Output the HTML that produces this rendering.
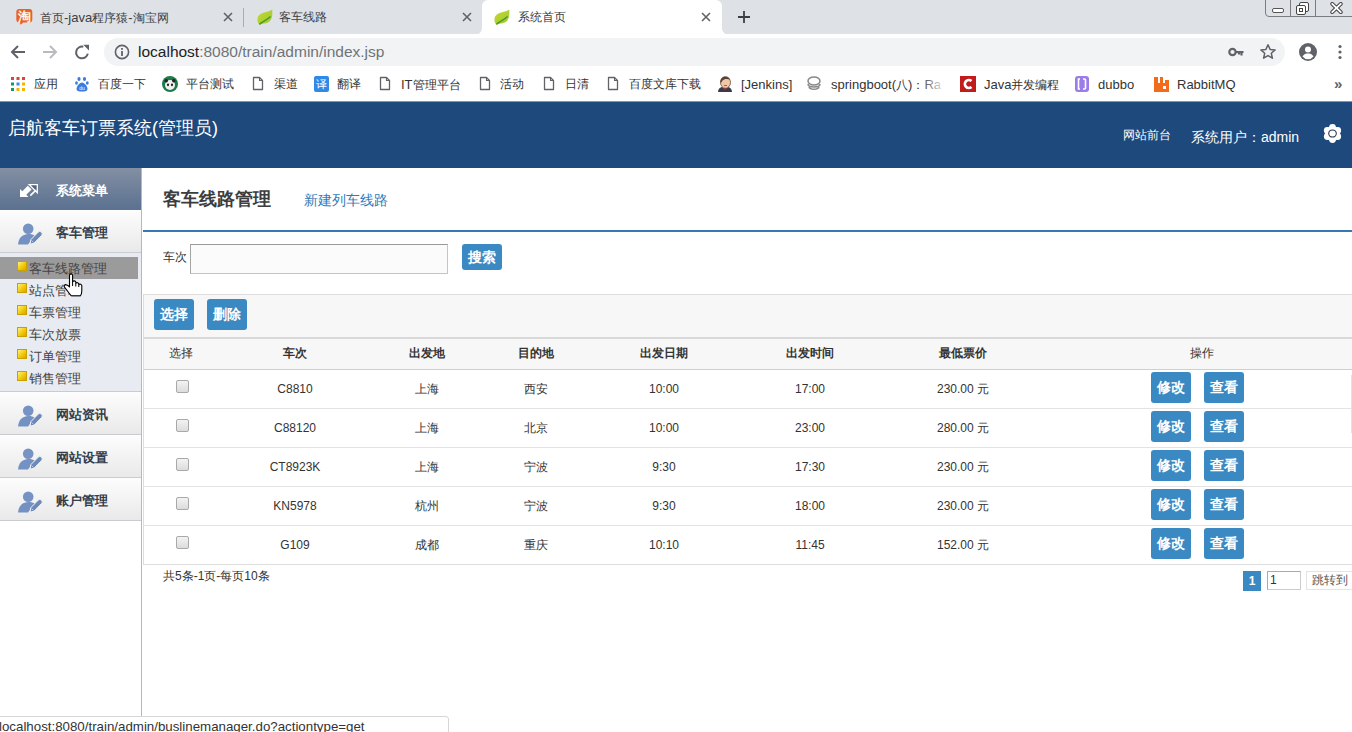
<!DOCTYPE html>
<html><head><meta charset="utf-8">
<style>
*{box-sizing:border-box}
html,body{margin:0;padding:0}
body{width:1352px;height:732px;overflow:hidden;position:relative;font-family:"Liberation Sans",sans-serif;background:#fff;color:#333}
.a{position:absolute}
.nw{white-space:nowrap}
/* chrome */
#tabbar{left:0;top:0;width:1352px;height:34px;background:#dee1e6}
.tabtxt{font-size:12px;color:#3c4043;top:10px;line-height:15px}
.tabx{width:10px;height:10px}
#toolbar{left:0;top:34px;width:1352px;height:34px;background:#fff}
#omni{left:104px;top:38px;width:1181px;height:28px;background:#f1f3f4;border-radius:14px}
#bm{left:0;top:68px;width:1352px;height:34px;background:#fff}
.l{font-size:13px}
.bmt{font-size:12px;color:#333;top:77px;line-height:15px}
/* page */
#hdr{left:0;top:101px;width:1352px;height:67px;background:#1e497d;border-top:1px solid #8696ad}
#side{left:0;top:168px;width:142px;height:564px;background:#fff;border-right:1px solid #b8b8b8}
.sec{left:0;width:141px;height:43px;background:linear-gradient(#fdfdfd,#e9e9ea);border-bottom:1px solid #c9cbd0}
.sect{left:56px;font-size:13px;font-weight:bold;color:#343d4b;line-height:16px}
.sub{font-size:13px;color:#444;line-height:15px;left:29px}
.sq{left:17px;width:10px;height:10px;background:linear-gradient(135deg,#fff27a,#f1c400 60%,#d9a400);border:1px solid #c7a100}
.btn{background:#3a89c2;color:#fff;font-weight:bold;font-size:14px;border-radius:3px;text-align:center}
.th{font-size:12px;color:#333;font-weight:bold;top:346px;line-height:15px}
.td{font-size:12px;color:#333;line-height:15px}
.rowb{left:143px;width:1209px;height:1px;background:#e3e3e3}
.cb{width:13px;height:13px;border:1px solid #a9a9a9;border-radius:2px;background:linear-gradient(#f3f3f3,#dcdcdc)}
</style></head><body>

<!-- TAB BAR -->
<div id="tabbar" class="a"></div>
<svg class="a" style="left:474px;top:0" width="256" height="34" viewBox="0 0 256 34"><path d="M0 34A6 6 0 0 0 8 28V6A6 6 0 0 1 14 0H242A6 6 0 0 1 248 6V28A6 6 0 0 0 256 34Z" fill="#fff"/></svg>
<div class="a" style="left:243px;top:8px;width:1px;height:19px;background:#a9acb1"></div>


<!-- tab contents -->
<svg class="a" style="left:16px;top:8px" width="17" height="18" viewBox="0 0 17 18"><path d="M3.3 0.9h10a3 3 0 0 1 3 3v7.5a3 3 0 0 1-3 3H7.2L4.6 16.8L3.8 14.4h-.5a3 3 0 0 1-3-3V3.9a3 3 0 0 1 3-3z" fill="#e8622b"/><text x="8.3" y="12.6" font-size="12.5" font-weight="bold" fill="#fff6e8" text-anchor="middle" font-family="Liberation Sans">淘</text></svg>
<div class="a tabtxt nw" style="left:40px">首页<span class="l">-java</span>程序猿<span class="l">-</span>淘宝网</div>
<svg class="a" style="left:223px;top:12px" width="10" height="10" viewBox="0 0 10 10"><path d="M1 1L9 9M9 1L1 9" stroke="#5f6368" stroke-width="1.6"/></svg>
<svg class="a" style="left:257px;top:9px" width="16" height="17" viewBox="0 0 16 17"><defs><linearGradient id="lg257" x1="0" y1="0" x2="1" y2="1"><stop offset="0" stop-color="#c6da2c"/><stop offset="1" stop-color="#9cc836"/></linearGradient></defs><path d="M15.2 0.6C11 4 5 2.5 1.5 7C0 9 0 13 2.3 15.6C5 14.5 9 15 12.5 12.5C15.5 10 15.5 5 15.2 0.6Z" fill="url(#lg257)"/><path d="M2.4 15.4C5.5 12.5 9.5 11.5 13.5 7.5" stroke="#4a9a2a" stroke-width="1.5" fill="none"/></svg>
<div class="a tabtxt nw" style="left:279px">客车线路</div>
<svg class="a" style="left:462px;top:12px" width="10" height="10" viewBox="0 0 10 10"><path d="M1 1L9 9M9 1L1 9" stroke="#5f6368" stroke-width="1.6"/></svg>
<svg class="a" style="left:494px;top:9px" width="16" height="17" viewBox="0 0 16 17"><defs><linearGradient id="lg494" x1="0" y1="0" x2="1" y2="1"><stop offset="0" stop-color="#c6da2c"/><stop offset="1" stop-color="#9cc836"/></linearGradient></defs><path d="M15.2 0.6C11 4 5 2.5 1.5 7C0 9 0 13 2.3 15.6C5 14.5 9 15 12.5 12.5C15.5 10 15.5 5 15.2 0.6Z" fill="url(#lg494)"/><path d="M2.4 15.4C5.5 12.5 9.5 11.5 13.5 7.5" stroke="#4a9a2a" stroke-width="1.5" fill="none"/></svg>
<div class="a tabtxt nw" style="left:518px">系统首页</div>
<svg class="a" style="left:701px;top:12px" width="10" height="10" viewBox="0 0 10 10"><path d="M1 1L9 9M9 1L1 9" stroke="#5f6368" stroke-width="1.6"/></svg>
<svg class="a" style="left:737px;top:10px" width="14" height="14" viewBox="0 0 14 14"><path d="M7 1V13M1 7H13" stroke="#3c4043" stroke-width="1.8"/></svg>
<!-- window controls -->
<div class="a" style="left:1265px;top:-2px;width:90px;height:19px;border:1px solid #7a7c80;border-radius:0 0 0 4px"></div>
<div class="a" style="left:1290px;top:0;width:1px;height:16px;background:#7a7c80"></div>
<div class="a" style="left:1315px;top:0;width:1px;height:16px;background:#7a7c80"></div>
<div class="a" style="left:1272px;top:8px;width:12px;height:5px;border:1px solid #555;border-radius:2px;background:#fff"></div>
<svg class="a" style="left:1295px;top:1px" width="15" height="15" viewBox="0 0 15 15"><rect x="4.5" y="1.5" width="9" height="9" rx="1.5" fill="#fff" stroke="#444"/><rect x="1.5" y="4.5" width="9" height="9" rx="1.5" fill="#fff" stroke="#444"/><rect x="4.5" y="7.5" width="3" height="3" fill="none" stroke="#444"/></svg>
<svg class="a" style="left:1330px;top:2px" width="13" height="12" viewBox="0 0 13 12"><path d="M2.2 1.8L10.8 10.2M10.8 1.8L2.2 10.2" stroke="#444" stroke-width="3.8" stroke-linecap="round"/><path d="M2.2 1.8L10.8 10.2M10.8 1.8L2.2 10.2" stroke="#fff" stroke-width="1.8" stroke-linecap="round"/></svg>

<!-- TOOLBAR -->
<div id="toolbar" class="a"></div>
<div id="omni" class="a"></div>
<div class="a nw" style="left:138px;top:43px;font-size:15.5px;line-height:18px;color:#202124">localhost<span style="color:#6f7378">:8080/train/admin/index.jsp</span></div>


<svg class="a" style="left:10px;top:44px" width="16" height="16" viewBox="0 0 16 16"><path d="M15 8H2.5M8 2L2 8l6 6" stroke="#5f6368" stroke-width="2" fill="none"/></svg>
<svg class="a" style="left:42px;top:44px" width="16" height="16" viewBox="0 0 16 16"><path d="M1 8h12.5M8 2l6 6-6 6" stroke="#b9bbbe" stroke-width="2" fill="none"/></svg>
<svg class="a" style="left:74px;top:44px" width="16" height="16" viewBox="0 0 16 16"><path d="M9.3 2.7A5.9 5.9 0 1 0 13.8 9.6" stroke="#5f6368" stroke-width="2" fill="none"/><path d="M9.3 0.8H15V6.5z" fill="#5f6368"/></svg>
<svg class="a" style="left:114px;top:44px" width="16" height="16" viewBox="0 0 16 16"><circle cx="8" cy="8" r="6.6" stroke="#5f6368" stroke-width="1.6" fill="none"/><rect x="7.1" y="7" width="1.8" height="5" fill="#5f6368"/><rect x="7.1" y="4" width="1.8" height="1.8" fill="#5f6368"/></svg>
<svg class="a" style="left:1228px;top:45px" width="17" height="14" viewBox="0 0 17 14"><circle cx="4.5" cy="7" r="3.2" stroke="#5f6368" stroke-width="2.2" fill="none"/><path d="M7.5 7H15.5M13.5 7V10.5M11 7V9.5" stroke="#5f6368" stroke-width="2.2" fill="none"/></svg>
<svg class="a" style="left:1259px;top:43px" width="18" height="18" viewBox="0 0 18 18"><path d="M9 1.8l2.1 4.6 5 .5-3.8 3.4 1.1 4.9L9 12.6l-4.4 2.6 1.1-4.9L1.9 6.9l5-.5z" stroke="#5f6368" stroke-width="1.5" fill="none" stroke-linejoin="round"/></svg>
<svg class="a" style="left:1298px;top:42px" width="20" height="20" viewBox="0 0 20 20"><circle cx="10" cy="10" r="9" fill="#5f6368"/><circle cx="10" cy="7.5" r="3" fill="#fff"/><path d="M4.5 14.5c1.5-2.5 3.3-3 5.5-3s4 .5 5.5 3a7 7 0 0 1-11 0z" fill="#fff"/></svg>
<svg class="a" style="left:1337px;top:44px" width="6" height="16" viewBox="0 0 6 16"><circle cx="3" cy="2.5" r="1.6" fill="#5f6368"/><circle cx="3" cy="8" r="1.6" fill="#5f6368"/><circle cx="3" cy="13.5" r="1.6" fill="#5f6368"/></svg>

<!-- BOOKMARKS -->
<div id="bm" class="a"></div>


<svg class="a" style="left:11px;top:77px" width="14" height="14" viewBox="0 0 14 14">
<rect x="0" y="0" width="3" height="3" fill="#db4437"/><rect x="5.5" y="0" width="3" height="3" fill="#db4437"/><rect x="11" y="0" width="3" height="3" fill="#db4437"/>
<rect x="0" y="5.5" width="3" height="3" fill="#0f9d58"/><rect x="5.5" y="5.5" width="3" height="3" fill="#4285f4"/><rect x="11" y="5.5" width="3" height="3" fill="#f4b400"/>
<rect x="0" y="11" width="3" height="3" fill="#0f9d58"/><rect x="5.5" y="11" width="3" height="3" fill="#f4b400"/><rect x="11" y="11" width="3" height="3" fill="#f4b400"/></svg>
<div class="a bmt nw" style="left:34px">应用</div>
<svg class="a" style="left:75px;top:76px" width="14" height="16" viewBox="0 0 14 16"><ellipse cx="4" cy="3" rx="1.6" ry="2" fill="#3a7be0"/><ellipse cx="9.5" cy="3" rx="1.6" ry="2" fill="#3a7be0"/><ellipse cx="1.5" cy="7" rx="1.4" ry="1.8" fill="#3a7be0"/><ellipse cx="12.3" cy="7" rx="1.4" ry="1.8" fill="#3a7be0"/><path d="M7 6.5c2.5 0 5.5 4 5.5 6.5 0 2-2 2.5-5.5 2.5S1.5 15 1.5 13c0-2.5 3-6.5 5.5-6.5z" fill="#3a7be0"/><text x="7" y="13.6" font-size="5" fill="#fff" text-anchor="middle" font-family="Liberation Sans">du</text></svg>
<div class="a bmt nw" style="left:98px">百度一下</div>
<svg class="a" style="left:162px;top:76px" width="16" height="16" viewBox="0 0 16 16"><circle cx="8" cy="8" r="8" fill="#1e7a4a"/><circle cx="8" cy="9" r="5" fill="#f2f2f2"/><circle cx="4.2" cy="4.8" r="1.8" fill="#222"/><circle cx="11.8" cy="4.8" r="1.8" fill="#222"/><ellipse cx="6" cy="8.8" rx="1.1" ry="1.4" fill="#222"/><ellipse cx="10" cy="8.8" rx="1.1" ry="1.4" fill="#222"/></svg>
<div class="a bmt nw" style="left:186px">平台测试</div>
<svg class="a" style="left:252px;top:76px" width="12" height="15" viewBox="0 0 12 15"><path d="M1.5 1.5h6l3 3v9h-9z" stroke="#5f6368" stroke-width="1.3" fill="#fff" stroke-linejoin="round"/><path d="M7.5 1.5v3h3" stroke="#5f6368" stroke-width="1.1" fill="none"/></svg>
<div class="a bmt nw" style="left:274px">渠道</div>
<div class="a" style="left:314px;top:76px;width:15px;height:16px;background:#2e8ae6;border-radius:2px;color:#fff;font-size:11px;line-height:16px;text-align:center">译</div>
<div class="a bmt nw" style="left:337px">翻译</div>
<svg class="a" style="left:379px;top:76px" width="12" height="15" viewBox="0 0 12 15"><path d="M1.5 1.5h6l3 3v9h-9z" stroke="#5f6368" stroke-width="1.3" fill="#fff" stroke-linejoin="round"/><path d="M7.5 1.5v3h3" stroke="#5f6368" stroke-width="1.1" fill="none"/></svg>
<div class="a bmt nw" style="left:401px"><span class="l">IT</span>管理平台</div>
<svg class="a" style="left:479px;top:76px" width="12" height="15" viewBox="0 0 12 15"><path d="M1.5 1.5h6l3 3v9h-9z" stroke="#5f6368" stroke-width="1.3" fill="#fff" stroke-linejoin="round"/><path d="M7.5 1.5v3h3" stroke="#5f6368" stroke-width="1.1" fill="none"/></svg>
<div class="a bmt nw" style="left:500px">活动</div>
<svg class="a" style="left:543px;top:76px" width="12" height="15" viewBox="0 0 12 15"><path d="M1.5 1.5h6l3 3v9h-9z" stroke="#5f6368" stroke-width="1.3" fill="#fff" stroke-linejoin="round"/><path d="M7.5 1.5v3h3" stroke="#5f6368" stroke-width="1.1" fill="none"/></svg>
<div class="a bmt nw" style="left:565px">日清</div>
<svg class="a" style="left:607px;top:76px" width="12" height="15" viewBox="0 0 12 15"><path d="M1.5 1.5h6l3 3v9h-9z" stroke="#5f6368" stroke-width="1.3" fill="#fff" stroke-linejoin="round"/><path d="M7.5 1.5v3h3" stroke="#5f6368" stroke-width="1.1" fill="none"/></svg>
<div class="a bmt nw" style="left:629px">百度文库下载</div>
<svg class="a" style="left:717px;top:75px" width="16" height="17" viewBox="0 0 16 17"><path d="M1 17c0-3 2-4.5 4-5l3 2 3-2c2 .5 4 2 4 5z" fill="#3a3a4a"/><path d="M6 13l2 2 2-2-2-1z" fill="#c03030"/><ellipse cx="8.5" cy="7.5" rx="5" ry="5.8" fill="#f0c8a8" stroke="#6a4a3a" stroke-width="0.8"/><path d="M3.5 8C3 4 5 1.5 8.5 1.7c2.5.1 4 1.3 4.5 3C11 3.5 7 3.5 5.5 5.5 5 6.5 4.5 7.5 3.5 8z" fill="#5a4032"/><path d="M7 10.5h3" stroke="#7a4a3a" stroke-width="0.8"/></svg>
<div class="a bmt nw" style="left:741px"><span class="l">[Jenkins]</span></div>
<svg class="a" style="left:806px;top:76px" width="16" height="15" viewBox="0 0 16 15"><ellipse cx="8" cy="5" rx="6" ry="4" fill="none" stroke="#888" stroke-width="1.5"/><path d="M2 8c0 4 12 4 12 0M3 11c1 3 9 3 10 0" stroke="#888" stroke-width="1.5" fill="none"/></svg>
<div class="a bmt nw" style="left:831px;color:#333"><span class="l">springboot(</span>八<span class="l">)</span>：<span class="l">Ra</span></div>
<div class="a" style="left:920px;top:74px;width:26px;height:20px;background:linear-gradient(90deg,rgba(255,255,255,0),#fff)"></div>
<svg class="a" style="left:960px;top:76px" width="16" height="16" viewBox="0 0 16 16"><rect width="16" height="16" fill="#c21b1b"/><path d="M11.5 5a4 4 0 1 0 0 6" stroke="#fff" stroke-width="2.6" fill="none"/></svg>
<div class="a bmt nw" style="left:984px"><span class="l">Java</span>并发编程</div>
<svg class="a" style="left:1075px;top:76px" width="14" height="16" viewBox="0 0 14 16"><rect x="0" y="0" width="14" height="16" rx="3" fill="#9b7ce8"/><path d="M5 3h-1.5v10H5M8 3h1.5a1 1 0 0 1 1 1v8a1 1 0 0 1-1 1H8" stroke="#fff" stroke-width="1.6" fill="none"/></svg>
<div class="a bmt nw" style="left:1098px"><span class="l">dubbo</span></div>
<svg class="a" style="left:1154px;top:76px" width="15" height="16" viewBox="0 0 15 16"><path d="M0 1h4v6h2V1h3v6h2V4h4v12H0z" fill="#f26b1d"/><rect x="9" y="10" width="3" height="3" fill="#fff"/></svg>
<div class="a bmt nw" style="left:1177px"><span class="l">RabbitMQ</span></div>
<div class="a nw" style="left:1334px;top:75px;font-size:15px;font-weight:bold;line-height:18px;color:#5f6368">»</div>

<!-- HEADER -->
<div id="hdr" class="a"></div>
<div class="a nw" style="left:8px;top:117px;font-size:18px;line-height:22px;color:#fff">启航客车订票系统(管理员)</div>
<div class="a nw" style="left:1123px;top:127px;font-size:12px;line-height:16px;color:#fff">网站前台</div>
<div class="a nw" style="left:1191px;top:128px;font-size:14px;line-height:18px;color:#fff">系统用户：admin</div>

<!-- SIDEBAR -->
<div id="side" class="a"></div>
<div class="a" style="left:0;top:168px;width:141px;height:42px;background:linear-gradient(#838fa3,#5a7190)"></div>
<div class="a nw" style="left:56px;top:183px;font-size:13px;font-weight:bold;color:#fff;line-height:16px">系统菜单</div>

<div class="a sec" style="top:210px"></div>
<div class="a sect nw" style="top:225px">客车管理</div>
<div class="a" style="left:0;top:253px;width:141px;height:139px;background:#e8ebf1;border-bottom:1px solid #c9cbd0"></div>
<div class="a" style="left:0;top:257px;width:138px;height:22px;background:#9b9b9b"></div>
<div class="a sq" style="top:261px"></div><div class="a sub nw" style="top:261px">客车线路管理</div>
<div class="a sq" style="top:283px"></div><div class="a sub nw" style="top:283px">站点管理</div>
<div class="a sq" style="top:305px"></div><div class="a sub nw" style="top:305px">车票管理</div>
<div class="a sq" style="top:327px"></div><div class="a sub nw" style="top:327px">车次放票</div>
<div class="a sq" style="top:349px"></div><div class="a sub nw" style="top:349px">订单管理</div>
<div class="a sq" style="top:371px"></div><div class="a sub nw" style="top:371px">销售管理</div>
<div class="a sec" style="top:392px"></div><div class="a sect nw" style="top:407px">网站资讯</div>
<div class="a sec" style="top:435px"></div><div class="a sect nw" style="top:450px">网站设置</div>
<div class="a sec" style="top:478px"></div><div class="a sect nw" style="top:493px">账户管理</div>


<svg class="a" style="left:18px;top:182px" width="22" height="17" viewBox="0 0 22 17"><path d="M2 7V15H10.5L8.3 12.8L13.6 7.5L9.8 3.7L4.3 9.2z" fill="#fff"/><path d="M11.3 2.7H19.3V10.7z" fill="#566479" stroke="#fff" stroke-width="1.3" stroke-linejoin="miter"/><path d="M12.3 13.6L18 8" stroke="#fff" stroke-width="1.7"/></svg>
<svg class="a" style="left:17px;top:222px" width="26" height="24" viewBox="0 0 26 24"><circle cx="11.2" cy="6.7" r="5.3" fill="#7693c4"/><path d="M1.1 22.6C1.3 16.5 5 12.2 11.5 12c2.8 0 4.8.6 6.3 1.6L11 22.6z" fill="#7391c2"/><path d="M21.1 10.2A2.4 2.4 0 0 1 24.5 13.6L17.2 21.1L13.1 22.2L13.8 17.7Z" fill="#6d89b8" stroke="#eef1f6" stroke-width="1"/><path d="M14.5 18.4l2 2" stroke="#dfe6f0" stroke-width="0.7"/></svg><svg class="a" style="left:17px;top:404px" width="26" height="24" viewBox="0 0 26 24"><circle cx="11.2" cy="6.7" r="5.3" fill="#7693c4"/><path d="M1.1 22.6C1.3 16.5 5 12.2 11.5 12c2.8 0 4.8.6 6.3 1.6L11 22.6z" fill="#7391c2"/><path d="M21.1 10.2A2.4 2.4 0 0 1 24.5 13.6L17.2 21.1L13.1 22.2L13.8 17.7Z" fill="#6d89b8" stroke="#eef1f6" stroke-width="1"/><path d="M14.5 18.4l2 2" stroke="#dfe6f0" stroke-width="0.7"/></svg><svg class="a" style="left:17px;top:447px" width="26" height="24" viewBox="0 0 26 24"><circle cx="11.2" cy="6.7" r="5.3" fill="#7693c4"/><path d="M1.1 22.6C1.3 16.5 5 12.2 11.5 12c2.8 0 4.8.6 6.3 1.6L11 22.6z" fill="#7391c2"/><path d="M21.1 10.2A2.4 2.4 0 0 1 24.5 13.6L17.2 21.1L13.1 22.2L13.8 17.7Z" fill="#6d89b8" stroke="#eef1f6" stroke-width="1"/><path d="M14.5 18.4l2 2" stroke="#dfe6f0" stroke-width="0.7"/></svg><svg class="a" style="left:17px;top:490px" width="26" height="24" viewBox="0 0 26 24"><circle cx="11.2" cy="6.7" r="5.3" fill="#7693c4"/><path d="M1.1 22.6C1.3 16.5 5 12.2 11.5 12c2.8 0 4.8.6 6.3 1.6L11 22.6z" fill="#7391c2"/><path d="M21.1 10.2A2.4 2.4 0 0 1 24.5 13.6L17.2 21.1L13.1 22.2L13.8 17.7Z" fill="#6d89b8" stroke="#eef1f6" stroke-width="1"/><path d="M14.5 18.4l2 2" stroke="#dfe6f0" stroke-width="0.7"/></svg>
<svg class="a" style="left:1322px;top:123px" width="21" height="21" viewBox="0 0 21 21"><g fill="#fff"><circle cx="10.5" cy="10.5" r="7.4"/><circle cx="10.50" cy="4.50" r="3.4"/><circle cx="15.70" cy="7.50" r="3.4"/><circle cx="15.70" cy="13.50" r="3.4"/><circle cx="10.50" cy="16.50" r="3.4"/><circle cx="5.30" cy="13.50" r="3.4"/><circle cx="5.30" cy="7.50" r="3.4"/></g><ellipse cx="10.5" cy="10.5" rx="3.8" ry="3.5" fill="#fff" stroke="#2d3a4d" stroke-width="1.1"/></svg>

<!-- CONTENT -->
<div class="a nw" style="left:163px;top:188px;font-size:18px;font-weight:bold;line-height:22px;color:#3d3d3d">客车线路管理</div>
<div class="a nw" style="left:304px;top:192px;font-size:14px;line-height:17px;color:#2f7bb8">新建列车线路</div>
<div class="a" style="left:143px;top:230px;width:1209px;height:2px;background:#3579b0"></div>

<div class="a nw" style="left:163px;top:250px;font-size:12px;line-height:15px;color:#333">车次</div>
<div class="a" style="left:190px;top:244px;width:258px;height:30px;background:#fbfbfb;border:1px solid #c4c4c4;border-top-color:#9a9a9a;border-left-color:#a5a5a5"></div>
<div class="a btn nw" style="left:462px;top:244px;width:40px;height:26px;line-height:26px">搜索</div>

<div class="a" style="left:143px;top:294px;width:1209px;height:44px;background:#f7f7f7;border-top:1px solid #ddd;border-left:1px solid #ddd"></div>
<div class="a btn nw" style="left:154px;top:299px;width:40px;height:31px;line-height:31px">选择</div>
<div class="a btn nw" style="left:207px;top:299px;width:40px;height:31px;line-height:31px">删除</div>

<div class="a" style="left:143px;top:337px;width:1209px;height:33px;background:#f7f7f7;border-top:2px solid #d9d9d9;border-bottom:1px solid #cfcfcf;border-left:1px solid #ddd"></div>
<div class="a" style="left:143px;top:370px;width:1209px;height:195px;background:#fff;border-left:1px solid #ddd;border-bottom:1px solid #ddd"></div>
<div class="a th nw" style="left:81px;width:200px;text-align:center;font-weight:normal;">选择</div>
<div class="a th nw" style="left:195px;width:200px;text-align:center;">车次</div>
<div class="a th nw" style="left:327px;width:200px;text-align:center;">出发地</div>
<div class="a th nw" style="left:436px;width:200px;text-align:center;">目的地</div>
<div class="a th nw" style="left:564px;width:200px;text-align:center;">出发日期</div>
<div class="a th nw" style="left:710px;width:200px;text-align:center;">出发时间</div>
<div class="a th nw" style="left:863px;width:200px;text-align:center;">最低票价</div>
<div class="a th nw" style="left:1102px;width:200px;text-align:center;font-weight:normal;">操作</div>
<div class="a cb" style="left:176px;top:380px"></div>
<div class="a td nw" style="left:195px;width:200px;text-align:center;top:381px;margin-top:1px">C8810</div>
<div class="a td nw" style="left:327px;width:200px;text-align:center;top:381px;margin-top:1px">上海</div>
<div class="a td nw" style="left:436px;width:200px;text-align:center;top:381px;margin-top:1px">西安</div>
<div class="a td nw" style="left:564px;width:200px;text-align:center;top:381px;margin-top:1px">10:00</div>
<div class="a td nw" style="left:710px;width:200px;text-align:center;top:381px;margin-top:1px">17:00</div>
<div class="a td nw" style="left:863px;width:200px;text-align:center;top:381px;margin-top:1px">230.00 元</div>
<div class="a btn nw" style="left:1151px;top:372px;width:40px;height:31px;line-height:31px">修改</div>
<div class="a btn nw" style="left:1204px;top:372px;width:40px;height:31px;line-height:31px">查看</div>
<div class="a rowb" style="top:408px"></div>
<div class="a cb" style="left:176px;top:419px"></div>
<div class="a td nw" style="left:195px;width:200px;text-align:center;top:420px;margin-top:1px">C88120</div>
<div class="a td nw" style="left:327px;width:200px;text-align:center;top:420px;margin-top:1px">上海</div>
<div class="a td nw" style="left:436px;width:200px;text-align:center;top:420px;margin-top:1px">北京</div>
<div class="a td nw" style="left:564px;width:200px;text-align:center;top:420px;margin-top:1px">10:00</div>
<div class="a td nw" style="left:710px;width:200px;text-align:center;top:420px;margin-top:1px">23:00</div>
<div class="a td nw" style="left:863px;width:200px;text-align:center;top:420px;margin-top:1px">280.00 元</div>
<div class="a btn nw" style="left:1151px;top:411px;width:40px;height:31px;line-height:31px">修改</div>
<div class="a btn nw" style="left:1204px;top:411px;width:40px;height:31px;line-height:31px">查看</div>
<div class="a rowb" style="top:447px"></div>
<div class="a cb" style="left:176px;top:458px"></div>
<div class="a td nw" style="left:195px;width:200px;text-align:center;top:459px;margin-top:1px">CT8923K</div>
<div class="a td nw" style="left:327px;width:200px;text-align:center;top:459px;margin-top:1px">上海</div>
<div class="a td nw" style="left:436px;width:200px;text-align:center;top:459px;margin-top:1px">宁波</div>
<div class="a td nw" style="left:564px;width:200px;text-align:center;top:459px;margin-top:1px">9:30</div>
<div class="a td nw" style="left:710px;width:200px;text-align:center;top:459px;margin-top:1px">17:30</div>
<div class="a td nw" style="left:863px;width:200px;text-align:center;top:459px;margin-top:1px">230.00 元</div>
<div class="a btn nw" style="left:1151px;top:450px;width:40px;height:31px;line-height:31px">修改</div>
<div class="a btn nw" style="left:1204px;top:450px;width:40px;height:31px;line-height:31px">查看</div>
<div class="a rowb" style="top:486px"></div>
<div class="a cb" style="left:176px;top:497px"></div>
<div class="a td nw" style="left:195px;width:200px;text-align:center;top:498px;margin-top:1px">KN5978</div>
<div class="a td nw" style="left:327px;width:200px;text-align:center;top:498px;margin-top:1px">杭州</div>
<div class="a td nw" style="left:436px;width:200px;text-align:center;top:498px;margin-top:1px">宁波</div>
<div class="a td nw" style="left:564px;width:200px;text-align:center;top:498px;margin-top:1px">9:30</div>
<div class="a td nw" style="left:710px;width:200px;text-align:center;top:498px;margin-top:1px">18:00</div>
<div class="a td nw" style="left:863px;width:200px;text-align:center;top:498px;margin-top:1px">230.00 元</div>
<div class="a btn nw" style="left:1151px;top:489px;width:40px;height:31px;line-height:31px">修改</div>
<div class="a btn nw" style="left:1204px;top:489px;width:40px;height:31px;line-height:31px">查看</div>
<div class="a rowb" style="top:525px"></div>
<div class="a cb" style="left:176px;top:536px"></div>
<div class="a td nw" style="left:195px;width:200px;text-align:center;top:537px;margin-top:1px">G109</div>
<div class="a td nw" style="left:327px;width:200px;text-align:center;top:537px;margin-top:1px">成都</div>
<div class="a td nw" style="left:436px;width:200px;text-align:center;top:537px;margin-top:1px">重庆</div>
<div class="a td nw" style="left:564px;width:200px;text-align:center;top:537px;margin-top:1px">10:10</div>
<div class="a td nw" style="left:710px;width:200px;text-align:center;top:537px;margin-top:1px">11:45</div>
<div class="a td nw" style="left:863px;width:200px;text-align:center;top:537px;margin-top:1px">152.00 元</div>
<div class="a btn nw" style="left:1151px;top:528px;width:40px;height:31px;line-height:31px">修改</div>
<div class="a btn nw" style="left:1204px;top:528px;width:40px;height:31px;line-height:31px">查看</div>
<div class="a nw" style="left:163px;top:569px;font-size:12px;line-height:15px;color:#333">共5条-1页-每页10条</div>
<div class="a" style="left:1243px;top:571px;width:18px;height:20px;background:#3a89c2;color:#fff;font-weight:bold;font-size:12px;line-height:20px;text-align:center">1</div>
<div class="a" style="left:1267px;top:571px;width:34px;height:19px;border:1px solid #aaa;border-bottom-color:#ccc;border-right-color:#ccc;font-size:12px;line-height:17px;padding-left:2px;color:#333">1</div>
<div class="a nw" style="left:1306px;top:571px;width:50px;height:19px;border:1px solid #e4e4e4;font-size:12px;line-height:17px;padding-left:5px;color:#555">跳转到</div>

<svg class="a" style="left:62px;top:272px" width="24" height="26" viewBox="0 0 24 26"><path d="M7.5 3Q9 0.8 10.6 3L10.6 9.5Q12.8 8 13.8 10L13.8 11Q15.8 10 16.8 12L16.8 12.5Q18.8 11.5 19.8 13.5L19.8 19Q19.8 22 18.3 23.8L9.3 23.8Q7.5 22 5.5 19L2.5 15.2Q1.5 13 3.5 12.6Q5.5 12.6 7.5 15z" fill="#fff" stroke="#000" stroke-width="1.1" stroke-linejoin="round"/><path d="M10.6 9.5V14M13.8 11V14.5M16.8 12.5V15" stroke="#000" stroke-width="1"/></svg>

<div class="a" style="left:1351px;top:375px;width:1px;height:58px;background:#e2e2e2"></div>
<!-- STATUS BAR -->
<div class="a" style="left:-1px;top:716px;width:450px;height:20px;background:#fff;border:1px solid #d6d6d6;border-radius:0 3px 0 0"></div>
<div class="a nw" style="left:-1px;top:719px;font-size:13.3px;line-height:16px;color:#333">localhost:8080/train/admin/buslinemanager.do?actiontype=get</div>

</body></html>
